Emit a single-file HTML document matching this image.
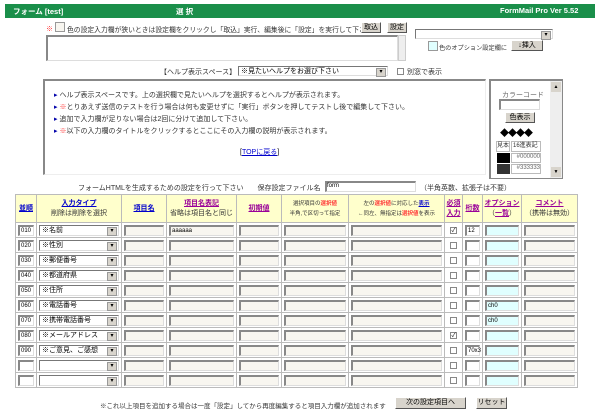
<!DOCTYPE html>
<html><head><meta charset="utf-8"><style>
*{box-sizing:border-box;margin:0;padding:0}
body{width:600px;height:416px;background:#fff;position:relative;overflow:hidden;font-family:"Liberation Sans","Noto Sans CJK JP",sans-serif;font-size:7px;color:#333}
.a{position:absolute;white-space:nowrap}
.in{position:absolute;background:#f8f6f0;border:1px solid #888;border-right-color:#ddd;border-bottom-color:#ddd;border-top-width:2px;border-left-width:2px}
.btn{position:absolute;background:#d8d4cc;border:1px solid #fff;border-right-color:#555;border-bottom-color:#555;font-size:7px;text-align:center;color:#000}
.sel{position:absolute;background:#fff;border:1px solid #777;border-right-color:#ddd;border-bottom-color:#ddd;font-size:7px;padding-left:2px;line-height:9px;color:#000}
.sel:after{content:"▾";position:absolute;right:1px;top:1px;width:8px;height:7px;background:#d8d4cc;font-size:6px;line-height:7px;text-align:center;border:1px solid #999}
.cb{position:absolute;width:7px;height:7px;border:1px solid #888;background:#fff;font-size:6px;line-height:6px;text-align:center;color:#000}
table{position:absolute;left:15px;top:194px;border-collapse:collapse;border:1px solid #aaa}
td{border:1px solid #bbb;height:15px;position:relative;padding:0}
th{background:#ffffcc;border:1px solid #bbb;height:28px;font-weight:normal;font-size:7px;line-height:10px;color:#333}
th u{color:#00c;font-weight:bold}
th .p{color:#909}
td .i{position:absolute;left:2px;right:2px;top:2px;bottom:1px;background:#f8f6f0;border:1px solid #888;border-right-color:#ddd;border-bottom-color:#ddd;border-top-width:2px;border-left-width:2px;font-size:6px;line-height:8px;padding-left:1px;color:#000}
td .w{background:#fff}
td .c{background:#e0ffff}
.r{color:#f33}
</style></head><body>
<div class="a" style="left:5px;top:4px;width:590px;height:14px;background:#1a8f4a"></div>
<div class="a" style="left:13px;top:6px;color:#fff;font-weight:bold;font-size:7.5px">フォーム [test]</div>
<div class="a" style="left:176px;top:6px;color:#fff;font-weight:bold;font-size:7.5px">選 択</div>
<div class="a" style="left:500px;top:6px;color:#fff;font-weight:bold;font-size:7.5px">FormMail Pro Ver 5.52</div>

<div class="a r" style="left:46px;top:24px">※</div>
<div class="a" style="left:55px;top:22px;width:10px;height:10px;border:1px solid #999;background:#f8f6f0"></div>
<div class="a" style="left:67px;top:24px;font-size:6.8px">色の設定入力欄が狭いときは設定欄をクリックし「取込」実行、編集後に「設定」を実行して下さい</div>
<div class="btn" style="left:361px;top:22px;width:20px;height:11px;line-height:9px">取込</div>
<div class="btn" style="left:387px;top:22px;width:20px;height:11px;line-height:9px">設定</div>
<div class="sel" style="left:415px;top:29px;width:138px;height:10px"></div>
<div class="in" style="left:46px;top:35px;width:352px;height:26px;background:#fff"></div>
<div class="a" style="left:398px;top:35px;width:8px;height:26px;background:#eee;border:1px solid #ccc"></div>
<div class="a" style="left:428px;top:41px;width:10px;height:10px;border:1px solid #999;background:#e0ffff"></div>
<div class="a" style="left:439px;top:43px;font-size:6.2px">色のオプション設定欄に</div>
<div class="btn" style="left:511px;top:40px;width:32px;height:11px;line-height:9px">↓挿入</div>

<div class="a" style="left:160px;top:67px">【ヘルプ表示スペース】</div>
<div class="sel" style="left:238px;top:66px;width:150px;height:10px">※見たいヘルプをお選び下さい</div>
<div class="cb" style="left:397px;top:68px"></div>
<div class="a" style="left:407px;top:67px">別窓で表示</div>

<div class="a" style="left:43px;top:79px;width:443px;height:96px;border:1px solid #888;border-top-width:2px;border-left-width:2px;border-right-color:#eee;border-bottom-color:#eee"></div>
<div class="a" style="left:54px;top:90px;line-height:12px"><span style="color:#00a">▸</span> ヘルプ表示スペースです。上の選択欄で見たいヘルプを選択するとヘルプが表示されます。<br><span style="color:#00a">▸</span> <span class="r">※</span>とりあえず送信のテストを行う場合は何も変更せずに「実行」ボタンを押してテストし後で編集して下さい。<br><span style="color:#00a">▸</span> 追加で入力欄が足りない場合は2回に分けて追加して下さい。<br><span style="color:#00a">▸</span> <span class="r">※</span>以下の入力欄のタイトルをクリックするとここにその入力欄の説明が表示されます。</div>
<div class="a" style="left:240px;top:147px;color:#000">[<u style="color:#00c">TOPに戻る</u>]</div>

<div class="a" style="left:489px;top:79px;width:74px;height:100px;border:1px solid #888;border-top-width:2px;border-left-width:2px"></div>
<div class="a" style="left:550px;top:81px;width:12px;height:97px;background:#eee"></div>
<div class="a" style="left:551px;top:82px;width:10px;height:10px;background:#d8d4cc;font-size:5px;text-align:center;line-height:10px;color:#000">▲</div>
<div class="a" style="left:551px;top:167px;width:10px;height:10px;background:#d8d4cc;font-size:5px;text-align:center;line-height:10px;color:#000">▼</div>
<div class="a" style="left:502px;top:90px;color:#666">カラーコード</div>
<div class="in" style="left:499px;top:99px;width:41px;height:11px;background:#fff"></div>
<div class="btn" style="left:505px;top:112px;width:30px;height:11px;line-height:9px">色表示</div>
<div class="a" style="left:500px;top:126px;font-size:9px;color:#000;letter-spacing:-1px">◆◆◆◆</div>
<div class="a" style="left:496px;top:141px;width:14px;height:11px;border:1px solid #bbb;font-size:6px;line-height:9px">見本</div>
<div class="a" style="left:511px;top:141px;width:30px;height:11px;border:1px solid #bbb;font-size:6px;line-height:9px;padding-left:1px">16進表記</div>
<div class="a" style="left:497px;top:153px;width:13px;height:10px;background:#000"></div>
<div class="a" style="left:511px;top:153px;width:30px;height:10px;border:1px solid #bbb;font-size:6px;text-align:right;color:#666">#000000</div>
<div class="a" style="left:497px;top:164px;width:13px;height:10px;background:#333"></div>
<div class="a" style="left:511px;top:164px;width:30px;height:10px;border:1px solid #bbb;font-size:6px;text-align:right;color:#666">#333333</div>

<div class="a" style="left:78px;top:183px">フォームHTMLを生成するための設定を行って下さい　　保存設定ファイル名</div>
<div class="in" style="left:325px;top:181px;width:91px;height:11px;background:#fff;font-size:6px;line-height:7px;color:#000">form</div>
<div class="a" style="left:420px;top:183px">（半角英数、拡張子は不要）</div>

<table>
<tr>
<th style="width:21px"><u>並順</u></th>
<th style="width:85px"><u>入力タイプ</u><br>削除は削除を選択</th>
<th style="width:45px"><u>項目名</u></th>
<th style="width:70px"><u class="p">項目名表記</u><br>省略は項目名と同じ</th>
<th style="width:45px"><u class="p">初期値</u></th>
<th style="width:67px;font-size:5.5px">選択項目の<b class="r">選択値</b><br>半角,で区切って指定</th>
<th style="width:96px;font-size:5.5px">左の<b class="r">選択値</b>に対応した<u>表示</u><br>←同左、無指定は<b class="r">選択値</b>を表示</th>
<th style="width:18px"><u class="p">必須</u><br><u class="p">入力</u></th>
<th style="width:20px"><u class="p">桁数</u></th>
<th style="width:39px"><u class="p">オプション</u><br>（<u class="p">一覧</u>）</th>
<th style="width:56px"><u class="p">コメント</u><br>（携帯は無効）</th>
</tr>
<tr><td><div class="i w">010</div></td><td><div class="sel" style="left:2px;top:2px;width:80px;height:11px">※名前</div></td><td><div class="i"></div></td><td><div class="i">aaaaaa</div></td><td><div class="i"></div></td><td><div class="i"></div></td><td><div class="i"></div></td><td><div class="cb" style="left:5px;top:4px">✓</div></td><td><div class="i w">12</div></td><td><div class="i c"></div></td><td><div class="i"></div></td></tr>
<tr><td><div class="i w">020</div></td><td><div class="sel" style="left:2px;top:2px;width:80px;height:11px">※性別</div></td><td><div class="i"></div></td><td><div class="i"></div></td><td><div class="i"></div></td><td><div class="i"></div></td><td><div class="i"></div></td><td><div class="cb" style="left:5px;top:4px"></div></td><td><div class="i w"></div></td><td><div class="i c"></div></td><td><div class="i"></div></td></tr>
<tr><td><div class="i w">030</div></td><td><div class="sel" style="left:2px;top:2px;width:80px;height:11px">※郵便番号</div></td><td><div class="i"></div></td><td><div class="i"></div></td><td><div class="i"></div></td><td><div class="i"></div></td><td><div class="i"></div></td><td><div class="cb" style="left:5px;top:4px"></div></td><td><div class="i w"></div></td><td><div class="i c"></div></td><td><div class="i"></div></td></tr>
<tr><td><div class="i w">040</div></td><td><div class="sel" style="left:2px;top:2px;width:80px;height:11px">※都道府県</div></td><td><div class="i"></div></td><td><div class="i"></div></td><td><div class="i"></div></td><td><div class="i"></div></td><td><div class="i"></div></td><td><div class="cb" style="left:5px;top:4px"></div></td><td><div class="i w"></div></td><td><div class="i c"></div></td><td><div class="i"></div></td></tr>
<tr><td><div class="i w">050</div></td><td><div class="sel" style="left:2px;top:2px;width:80px;height:11px">※住所</div></td><td><div class="i"></div></td><td><div class="i"></div></td><td><div class="i"></div></td><td><div class="i"></div></td><td><div class="i"></div></td><td><div class="cb" style="left:5px;top:4px"></div></td><td><div class="i w"></div></td><td><div class="i c"></div></td><td><div class="i"></div></td></tr>
<tr><td><div class="i w">060</div></td><td><div class="sel" style="left:2px;top:2px;width:80px;height:11px">※電話番号</div></td><td><div class="i"></div></td><td><div class="i"></div></td><td><div class="i"></div></td><td><div class="i"></div></td><td><div class="i"></div></td><td><div class="cb" style="left:5px;top:4px"></div></td><td><div class="i w"></div></td><td><div class="i c">ch0</div></td><td><div class="i"></div></td></tr>
<tr><td><div class="i w">070</div></td><td><div class="sel" style="left:2px;top:2px;width:80px;height:11px">※携帯電話番号</div></td><td><div class="i"></div></td><td><div class="i"></div></td><td><div class="i"></div></td><td><div class="i"></div></td><td><div class="i"></div></td><td><div class="cb" style="left:5px;top:4px"></div></td><td><div class="i w"></div></td><td><div class="i c">ch0</div></td><td><div class="i"></div></td></tr>
<tr><td><div class="i w">080</div></td><td><div class="sel" style="left:2px;top:2px;width:80px;height:11px">※メールアドレス</div></td><td><div class="i"></div></td><td><div class="i"></div></td><td><div class="i"></div></td><td><div class="i"></div></td><td><div class="i"></div></td><td><div class="cb" style="left:5px;top:4px">✓</div></td><td><div class="i w"></div></td><td><div class="i c"></div></td><td><div class="i"></div></td></tr>
<tr><td><div class="i w">090</div></td><td><div class="sel" style="left:2px;top:2px;width:80px;height:11px">※ご意見、ご感想</div></td><td><div class="i"></div></td><td><div class="i"></div></td><td><div class="i"></div></td><td><div class="i"></div></td><td><div class="i"></div></td><td><div class="cb" style="left:5px;top:4px"></div></td><td><div class="i w">70x3</div></td><td><div class="i c"></div></td><td><div class="i"></div></td></tr>
<tr><td><div class="i w"></div></td><td><div class="sel" style="left:2px;top:2px;width:80px;height:11px"></div></td><td><div class="i"></div></td><td><div class="i"></div></td><td><div class="i"></div></td><td><div class="i"></div></td><td><div class="i"></div></td><td><div class="cb" style="left:5px;top:4px"></div></td><td><div class="i w"></div></td><td><div class="i c"></div></td><td><div class="i"></div></td></tr>
<tr><td><div class="i w"></div></td><td><div class="sel" style="left:2px;top:2px;width:80px;height:11px"></div></td><td><div class="i"></div></td><td><div class="i"></div></td><td><div class="i"></div></td><td><div class="i"></div></td><td><div class="i"></div></td><td><div class="cb" style="left:5px;top:4px"></div></td><td><div class="i w"></div></td><td><div class="i c"></div></td><td><div class="i"></div></td></tr>
</table>

<div class="a" style="left:100px;top:400px;font-size:6.5px">※これ以上項目を追加する場合は一度「設定」してから再度編集すると項目入力欄が追加されます</div>
<div class="btn" style="left:395px;top:397px;width:71px;height:12px;line-height:10px">次の設定項目へ</div>
<div class="btn" style="left:476px;top:397px;width:31px;height:12px;line-height:10px">リセット</div>
</body></html>
